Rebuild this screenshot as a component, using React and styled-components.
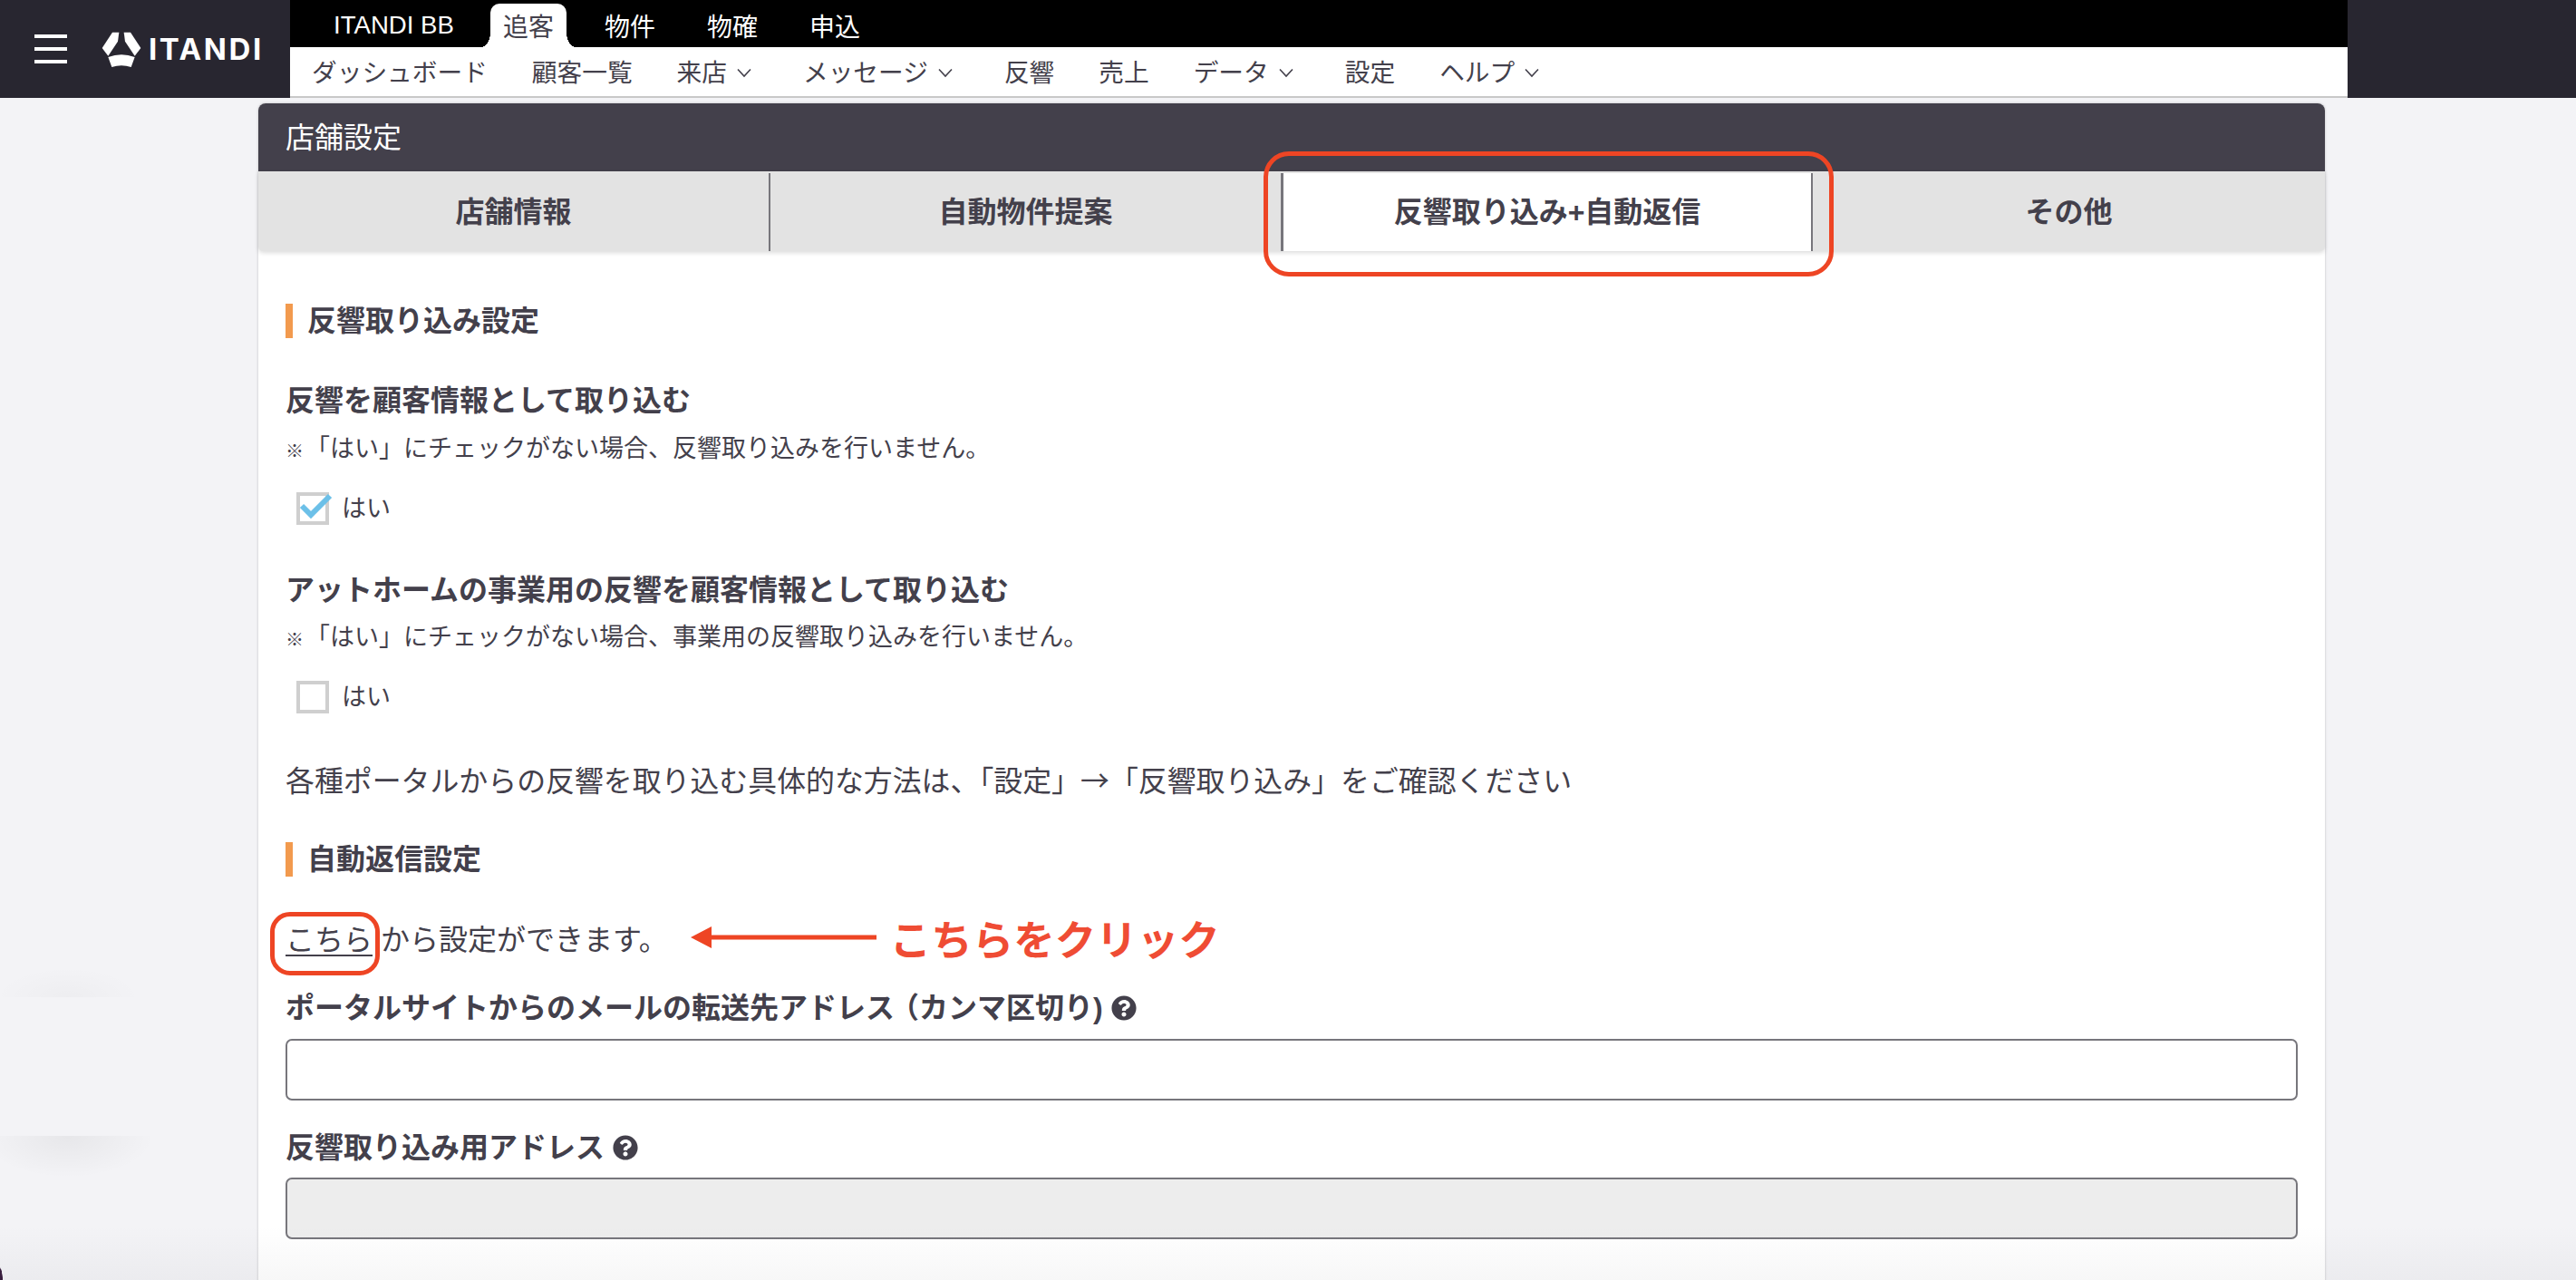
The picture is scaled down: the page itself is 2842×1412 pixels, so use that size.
import styled, { createGlobalStyle } from 'styled-components'
import { FaQuestionCircle } from 'react-icons/fa'

const INK = `#43404b`
const RED = `#ee4524`

const Global = createGlobalStyle`
    html, body {
        margin: 0;
        padding: 0;
    }

    body {
        font-family: "Liberation Sans", "Noto Sans CJK JP", sans-serif;
        color: ${ INK };
    }

    * {
        box-sizing: border-box;
    }
`

const Page = styled.div`
    position: relative;
    height: 100vh;
    overflow: hidden;
    background-color: #f3f3f6;
    background-image:
        radial-gradient(ellipse 3px 14px at 0 100%, #3a1e3f 85%, transparent 100%),
        radial-gradient(ellipse 95px 46px at 75px 0, rgba(0, 0, 0, 0.05), transparent),
        radial-gradient(ellipse 80px 33px at 75px 33px, rgba(0, 0, 0, 0.022), transparent);
    background-repeat: no-repeat;
    background-size: 100% 100%, 100% 50px, 100% 33px;
    background-position: 0 0, 0 1253px, 0 1067px;
`

const BottomFade = styled.div`
    position: absolute;
    left: 0;
    right: 0;
    bottom: 0;
    height: 60px;
    pointer-events: none;
    background: linear-gradient(to bottom, rgba(30, 30, 40, 0), rgba(30, 30, 40, 0.035));
`

const Header = styled.header`
    display: flex;
    height: 108px;
`

const Brand = styled.div`
    width: 320px;
    flex: none;
    display: flex;
    align-items: center;
    padding-left: 38px;
    background: #282630;
`

const Burger = styled.button`
    width: 36px;
    height: 32px;
    padding: 0;
    border: none;
    background:
        linear-gradient(#fff, #fff) 0 0 / 100% 4px no-repeat,
        linear-gradient(#fff, #fff) 0 14px / 100% 4px no-repeat,
        linear-gradient(#fff, #fff) 0 28px / 100% 4px no-repeat;
`

const LogoMark = styled.svg`
    width: 44px;
    height: 39px;
    margin-left: 38px;
    fill: #fff;
`

const LogoWord = styled.span`
    margin-left: 8px;
    font-family: "Inter", "Liberation Sans", sans-serif;
    font-size: 33px;
    font-weight: 700;
    letter-spacing: 2.6px;
    color: #fff;
`

const HeaderEnd = styled.div`
    width: 252px;
    flex: none;
    background: #282630;
`

const Navs = styled.div`
    flex: 1;
    display: flex;
    flex-direction: column;
`

const TopMenu = styled.nav`
    height: 52px;
    display: flex;
    align-items: stretch;
    gap: 29px;
    padding: 4px 0 0 34px;
    background: #000;
`

const TopItem = styled.a`
    position: relative;
    display: flex;
    align-items: center;
    padding: 0 14px;
    font-size: ${ p => p.$latin ? `27.6px` : `28px` };
    color: ${ p => p.$active ? INK : `#fff` };
    background: ${ p => p.$active ? `#fff` : `none` };
    border-radius: 10px 10px 0 0;
    margin: 0 ${ p => p.$active ? `-1px 0 -3px` : `0` };

    ${ p => p.$active && `
        &::before, &::after {
            content: "";
            position: absolute;
            bottom: 0;
            width: 10px;
            height: 16px;
        }

        &::before {
            left: -10px;
            background: radial-gradient(ellipse 100% 100% at 0 0, #000 98%, #fff 100%);
        }

        &::after {
            right: -10px;
            background: radial-gradient(ellipse 100% 100% at 100% 0, #000 98%, #fff 100%);
        }
    ` }
`

const SubMenu = styled.nav`
    height: 56px;
    display: flex;
    align-items: center;
    gap: 49px;
    padding: 3px 0 0 24px;
    background: #fff;
    border-bottom: 2px solid #c8c8c8;
`

const SubItem = styled.a`
    display: flex;
    align-items: center;
    gap: 10px;
    font-size: 27.7px;
    line-height: 40px;
    color: ${ INK };
`

const ChevronIcon = styled.svg`
    width: 18px;
    height: 11px;
    margin-right: 7px;
    fill: none;
    stroke: ${ INK };
    stroke-width: 1.6;
`

const Main = styled.main`
    padding: 6px 277px 0 285px;
`

const Panel = styled.section`
    background: #fff;
    border-radius: 8px 8px 0 0;
    box-shadow: 0 0 3px rgba(0, 0, 0, 0.22);
`

const PanelTitle = styled.h1`
    height: 75px;
    margin: 0;
    display: flex;
    align-items: center;
    padding: 0 0 5px 30px;
    font-size: 32px;
    font-weight: 400;
    color: #fff;
    background: ${ INK };
    border-radius: 8px 8px 0 0;
`

const Tabs = styled.div`
    display: grid;
    grid-template-columns: 565px 565px 585px 565px;
    height: 88px;
    padding-top: 2px;
    background: #e3e3e3;
    border-radius: 0 0 5px 5px;
    box-shadow: 0 2px 5px rgba(0, 0, 0, 0.14);
`

const Tab = styled.div`
    position: relative;
    display: flex;
    align-items: center;
    justify-content: center;
    padding-bottom: 7px;
    font-size: 32px;
    font-weight: 700;
    color: ${ INK };
    background: ${ p => p.$active ? `#fff` : `none` };
    border-right: ${ p => p.$last ? `none` : `2px solid #77767c` };
    border-left: ${ p => p.$active ? `1px solid #77767c` : `none` };
`

const TabHighlight = styled.span`
    position: absolute;
    top: -24px;
    bottom: -28px;
    left: -22px;
    right: -25px;
    border: 5px solid ${ RED };
    border-radius: 28px;
    pointer-events: none;
`

const Body = styled.div`
    padding: 0 30px 80px;
`

const SectionHeading = styled.h2`
    height: 38px;
    margin: ${ p => p.$first ? `58px` : `48px` } 0 0;
    padding-left: 16px;
    border-left: 8px solid #f29a4e;
    font-size: 32px;
    line-height: 38px;
    font-weight: 700;
    color: ${ INK };
`

const Label = styled.div`
    display: flex;
    align-items: center;
    gap: 9px;
    margin-top: ${ p => p.$top }px;
    font-size: 32px;
    line-height: 44px;
    font-weight: 700;
    color: ${ INK };
`

const Paren = styled.span`
    margin-left: -5px;
`

const Note = styled.p`
    margin: ${ p => p.$top }px 0 0;
    height: 36px;
    font-size: 27px;
    line-height: 36px;
    display: flex;
    align-items: center;
`

const NoteMark = styled.span`
    width: 22px;
    padding-top: 6px;
    font-size: 20px;
    line-height: 1;
    font-weight: 700;
    flex: none;
`

const CheckRow = styled.label`
    display: flex;
    align-items: center;
    gap: 14px;
    margin-top: 30px;
    padding-left: 12px;
    height: 36px;
    font-size: 27px;
`

const CheckText = styled.span`
    margin-top: -6px;
`

const Box = styled.span`
    position: relative;
    width: 36px;
    height: 36px;
    flex: none;
    border: 4px solid #cfcfcf;
    background: #fff;
`

const Tick = styled.svg`
    position: absolute;
    left: -4px;
    top: -4px;
    width: 42px;
    height: 36px;
    overflow: visible;
    fill: none;
    stroke: #6cc0e8;
    stroke-width: 6;
`

const Paragraph = styled.p`
    margin: 50px 0 0;
    font-family: "Noto Sans CJK JP", sans-serif;
    font-size: 31.9px;
    line-height: 44px;
`

const LinkRow = styled.div`
    display: flex;
    align-items: center;
    height: 44px;
    margin-top: 45px;
    font-size: 32px;
`

const SettingLink = styled.a`
    position: relative;
    color: ${ INK };
    text-decoration: underline;
    text-decoration-thickness: 2px;
    text-underline-offset: 5px;
`

const LinkHighlight = styled.span`
    position: absolute;
    left: -17px;
    right: -8px;
    top: -5px;
    bottom: -19px;
    border: 5px solid ${ RED };
    border-radius: 22px;
    pointer-events: none;
`

const RowText = styled.span`
    margin-left: 9px;
`

const ArrowIcon = styled.svg`
    width: 205px;
    height: 24px;
    margin-left: 25px;
    fill: ${ RED };
`

const Callout = styled.span`
    margin-left: 15px;
    font-size: 45.5px;
    font-weight: 700;
    color: #ef4c34;
`

const Field = styled.input`
    display: block;
    width: 100%;
    height: 68px;
    margin-top: ${ p => p.$top }px;
    border: 2px solid #77767c;
    border-radius: 7px;
    background: ${ p => p.disabled ? `#ededed` : `#fff` };
`

const HelpIcon = styled( FaQuestionCircle )`
    width: 28px;
    height: 28px;
    flex: none;
    color: ${ INK };
`

const Chevron = () => <ChevronIcon viewBox="0 0 18 11">
    <polyline points="2,1.5 9,9 16,1.5" />
</ChevronIcon>

export default function App() {

    return <Page>
        <Global />

        <Header>
            <Brand>
                <Burger aria-label="menu" />
                <LogoMark viewBox="0 0 132 117">
                    <polygon points="36,2 58,2 54,32 22,80 2,54" />
                    <polygon points="96,2 74,2 78,32 110,80 130,54" />
                    <path d="M22 84 Q66 67 110 84 L98 117 Q66 107 34 117 Z" />
                </LogoMark>
                <LogoWord>ITANDI</LogoWord>
            </Brand>

            <Navs>
                <TopMenu>
                    <TopItem $latin>ITANDI BB</TopItem>
                    <TopItem $active>追客</TopItem>
                    <TopItem>物件</TopItem>
                    <TopItem>物確</TopItem>
                    <TopItem>申込</TopItem>
                </TopMenu>
                <SubMenu>
                    <SubItem>ダッシュボード</SubItem>
                    <SubItem>顧客一覧</SubItem>
                    <SubItem>来店<Chevron /></SubItem>
                    <SubItem>メッセージ<Chevron /></SubItem>
                    <SubItem>反響</SubItem>
                    <SubItem>売上</SubItem>
                    <SubItem>データ<Chevron /></SubItem>
                    <SubItem>設定</SubItem>
                    <SubItem>ヘルプ<Chevron /></SubItem>
                </SubMenu>
            </Navs>

            <HeaderEnd />
        </Header>

        <Main>
            <Panel>
                <PanelTitle>店舗設定</PanelTitle>

                <Tabs>
                    <Tab>店舗情報</Tab>
                    <Tab>自動物件提案</Tab>
                    <Tab $active>
                        反響取り込み+自動返信
                        <TabHighlight />
                    </Tab>
                    <Tab $last>その他</Tab>
                </Tabs>

                <Body>
                    <SectionHeading $first>反響取り込み設定</SectionHeading>

                    <Label $top={ 47 }>反響を顧客情報として取り込む</Label>
                    <Note $top={ 13 }><NoteMark>※</NoteMark>「はい」にチェックがない場合、反響取り込みを行いません。</Note>
                    <CheckRow>
                        <Box>
                            <Tick viewBox="0 0 42 36">
                                <polyline points="6,15 16,25 37,4" />
                            </Tick>
                        </Box>
                        <CheckText>はい</CheckText>
                    </CheckRow>

                    <Label $top={ 50 }>アットホームの事業用の反響を顧客情報として取り込む</Label>
                    <Note $top={ 12 }><NoteMark>※</NoteMark>「はい」にチェックがない場合、事業用の反響取り込みを行いません。</Note>
                    <CheckRow>
                        <Box />
                        <CheckText>はい</CheckText>
                    </CheckRow>

                    <Paragraph>各種ポータルからの反響を取り込む具体的な方法は、「設定」→「反響取り込み」をご確認ください</Paragraph>

                    <SectionHeading>自動返信設定</SectionHeading>

                    <LinkRow>
                        <SettingLink>
                            こちら
                            <LinkHighlight />
                        </SettingLink>
                        <RowText>から設定ができます。</RowText>
                        <ArrowIcon viewBox="0 0 205 24">
                            <polygon points="0,12 23,0 23,9.5 205,9.5 205,14.5 23,14.5 23,24" />
                        </ArrowIcon>
                        <Callout>こちらをクリック</Callout>
                    </LinkRow>

                    <Label $top={ 34 }>
                        <span>ポータルサイトからのメールの転送先アドレス<Paren>（</Paren>カンマ区切り)</span>
                        <HelpIcon />
                    </Label>
                    <Field $top={ 12 } />

                    <Label $top={ 30 }>反響取り込み用アドレス<HelpIcon /></Label>
                    <Field $top={ 11 } disabled />
                </Body>
            </Panel>
        </Main>

        <BottomFade />
    </Page>

}
